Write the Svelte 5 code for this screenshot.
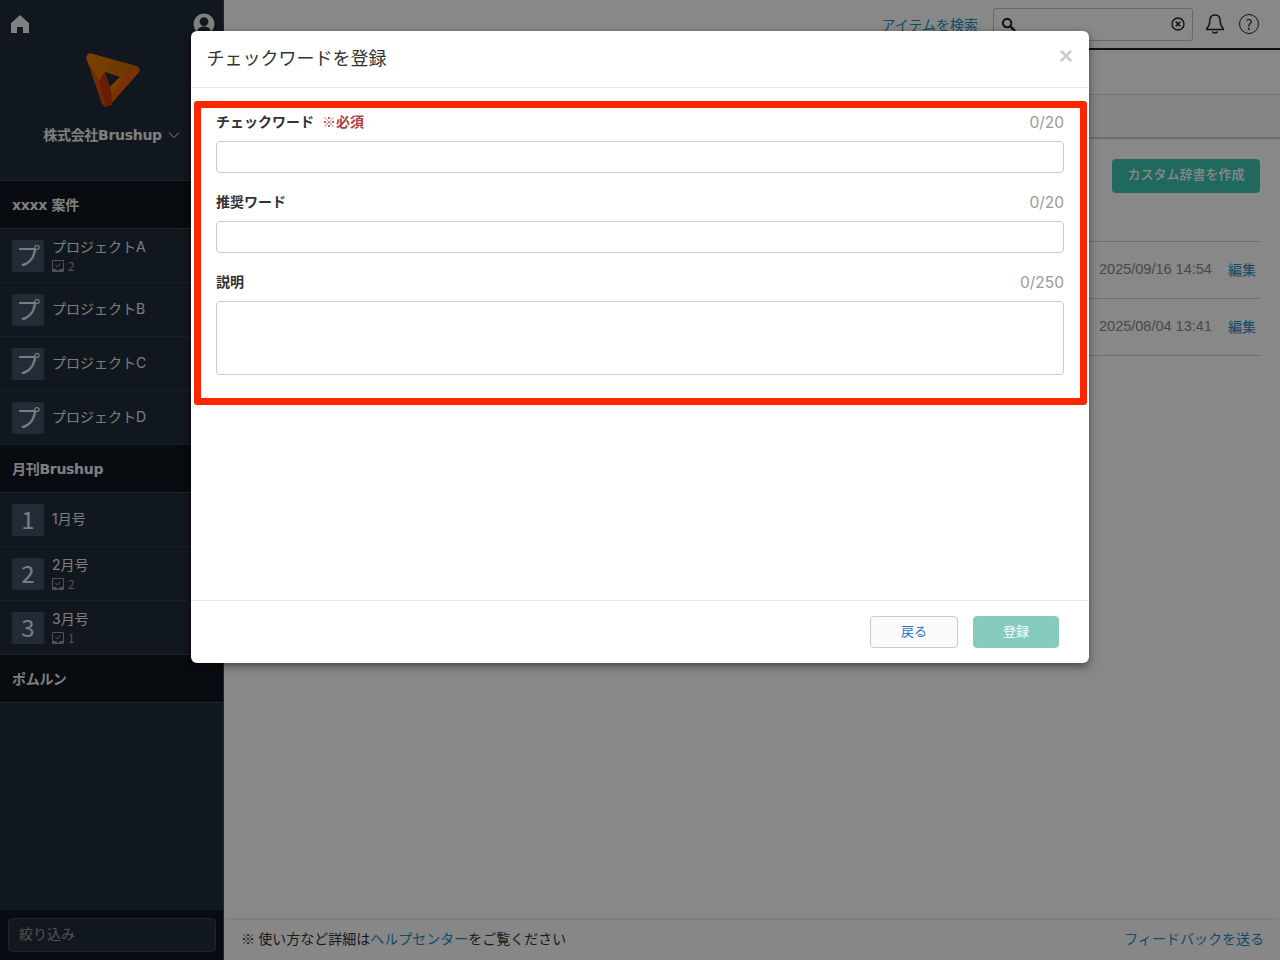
<script>
	const groups = [
		{
			title: 'xxxx 案件',
			items: [
				{ tile: 'プ', name: 'プロジェクトA', count: 2 },
				{ tile: 'プ', name: 'プロジェクトB' },
				{ tile: 'プ', name: 'プロジェクトC' },
				{ tile: 'プ', name: 'プロジェクトD' }
			]
		},
		{
			title: '月刊Brushup',
			items: [
				{ tile: '1', name: '1月号' },
				{ tile: '2', name: '2月号', count: 2 },
				{ tile: '3', name: '3月号', count: 1 }
			]
		},
		{ title: 'ポムルン', items: [] }
	];

	const rows = ['2025/09/16 14:54', '2025/08/04 13:41'];

	const fields = [
		{ label: 'チェックワード', required: true, counter: '0/20' },
		{ label: '推奨ワード', counter: '0/20' },
		{ label: '説明', counter: '0/250', multiline: true }
	];
</script>

<div class="app">
	<aside class="side">
		<div class="side-top">
			<svg class="home" viewBox="0 0 20 20" width="20" height="20"><path d="M10 1 1 9.200V19h6v-6h6v6h6V9.200z" fill="currentColor" /></svg>
			<svg class="user" viewBox="0 0 22 22" width="22" height="22">
				<circle cx="11" cy="11" r="10.500" fill="currentColor" />
				<circle cx="11" cy="8.600" r="4.400" fill="#212c3a" />
				<path d="M3.800 19c1-4 3.800-5.600 7.200-5.600s6.200 1.600 7.200 5.600z" fill="#212c3a" />
			</svg>
		</div>
		<svg class="logo" viewBox="0 0 56 56" width="56" height="56">
			<defs>
				<linearGradient id="band" x1="0" y1="0" x2="1" y2="0">
					<stop offset="0" stop-color="#e87a00" />
					<stop offset="1" stop-color="#c96400" />
				</linearGradient>
			</defs>
			<path d="M6 .5 51 13q5 2 3 6L25 52q-5 4-8-1L1.500 6Q1 0 6 .5z" fill="#d84c0c" />
			<path d="M6 .5 51 13q3 1 3.500 3L35 24 20 19 14 28 1.500 6Q1 0 6 .5z" fill="url(#band)" />
			<path d="M35 24 54.500 16q.5 1.500-.5 3L25 52q-2 2-4 1.500L26 34z" fill="#ee5810" />
			<path d="M20 19 26 34 27 52 21 53.500 14 28z" fill="#bf3a08" />
			<path d="M20 19 35 24 25 34z" fill="#212c3a" />
			<path d="M35 24 25 34 27 40 38 26z" fill="#e87a00" />
		</svg>
		<div class="company">株式会社Brushup
			<svg viewBox="0 0 12 8" width="12" height="8"><path d="M1 1.500 6 6.500l5-5" fill="none" stroke="currentColor" stroke-width="1" /></svg>
		</div>

		<nav class="nav">
			{#each groups as group}
				<div class="group-title">{group.title}</div>
				{#each group.items as item}
					<div class="item">
						<span class="tile">{item.tile}</span>
						<div class="item-text">
							<span class="item-name">{item.name}</span>
							{#if item.count}
								<span class="item-count">
									<svg viewBox="0 0 12 12" width="12" height="12">
										<path d="M.5.500h11v11H.5z" fill="none" stroke="currentColor" />
										<path d="M3.500 5 5.500 7 8.500 3.500" fill="none" stroke="currentColor" />
										<path d="M1 9h3l1 1.500h2L8 9h3v2.500H1z" fill="currentColor" />
									</svg>
									{item.count}
								</span>
							{/if}
						</div>
					</div>
				{/each}
			{/each}
		</nav>

		<div class="filter"><div class="filter-box">絞り込み</div></div>
	</aside>

	<main class="main">
		<header class="top">
			<a class="link search-link" href="#search">アイテムを検索</a>
			<div class="search">
				<svg viewBox="0 0 16 16" width="15" height="15"><circle cx="6.500" cy="6.500" r="4.500" fill="none" stroke="currentColor" stroke-width="2.200" /><path d="m10 10 5 5" stroke="currentColor" stroke-width="2.500" /></svg>
				<svg viewBox="0 0 14 14" width="14" height="14"><circle cx="7" cy="7" r="6" fill="none" stroke="currentColor" stroke-width="1.400" /><path d="m4.800 4.800 4.400 4.400m0-4.400-4.400 4.400" stroke="currentColor" stroke-width="1.600" /></svg>
			</div>
			<svg class="top-icon" viewBox="0 0 20 22" width="20" height="22"><path d="M10 2c-3.500 0-5.200 2.600-5.200 6 0 4-1 5.500-3 7.500v1h16.400v-1c-2-2-3-3.500-3-7.500 0-3.400-1.700-6-5.200-6z" fill="none" stroke="currentColor" stroke-width="1.500" /><path d="M7.500 18.500c.5 2 4.500 2 5 0" fill="none" stroke="currentColor" stroke-width="1.500" /></svg>
			<span class="help">?</span>
		</header>
		<div class="tabs"></div>
		<div class="subtabs"></div>
		<section class="content">
			<div class="actions"><span class="primary">カスタム辞書を作成</span></div>
			<div class="table">
				{#each rows as date}
					<div class="row">
						<span class="date">{date}</span>
						<a class="link edit" href="#edit">編集</a>
					</div>
				{/each}
			</div>
		</section>
		<footer class="foot">
			<span>※ 使い方など詳細は<a class="link" href="#help">ヘルプセンター</a>をご覧ください</span>
			<a class="link" href="#feedback">フィードバックを送る</a>
		</footer>
	</main>

	<div class="overlay">
		<div class="modal">
			<div class="modal-head">
				<h2>チェックワードを登録</h2>
				<span class="close">×</span>
			</div>
			<div class="modal-body">
				<div class="marked">
					{#each fields as field}
						<div class="field">
							<div class="field-head">
								<span class="field-label">{field.label}{#if field.required}<em>※必須</em>{/if}</span>
								<span class="counter">{field.counter}</span>
							</div>
							{#if field.multiline}
								<textarea class="control area"></textarea>
							{:else}
								<input class="control" type="text" />
							{/if}
						</div>
					{/each}
				</div>
			</div>
			<div class="modal-foot">
				<button class="back">戻る</button>
				<button class="submit">登録</button>
			</div>
		</div>
	</div>
</div>

<style>
	:global(body) {
		margin: 0;
	}
	.app {
		position: relative;
		display: flex;
		width: 1280px;
		height: 960px;
		overflow: hidden;
		background: #fff;
		font-family: "Noto Sans CJK JP", sans-serif;
		color: #333;
	}

	.side {
		flex: 0 0 223px;
		display: flex;
		flex-direction: column;
		background: #212c3a;
		color: #fff;
		border-right: 1px solid #3a4656;
	}
	.side-top {
		display: flex;
		justify-content: space-between;
		align-items: center;
		padding: 14px 8px 0 10px;
		height: 20px;
		color: #f0f0f0;
	}
	.logo {
		display: block;
		margin: 19px 0 0 85px;
	}
	.company {
		display: flex;
		align-items: center;
		justify-content: center;
		gap: 6px;
		margin-top: 14px;
		height: 24px;
		font-family: "DejaVu Sans", "Noto Sans CJK JP", sans-serif;
		font-size: 14px;
		font-weight: 700;
		letter-spacing: -0.3px;
		line-height: 24px;
		color: #eee;
	}
	.nav {
		flex: 1;
		margin-top: 33px;
		border-top: 1px solid #3a4656;
	}
	.group-title {
		height: 47px;
		padding-left: 12px;
		line-height: 48px;
		font-family: "DejaVu Sans", "Noto Sans CJK JP", sans-serif;
		font-size: 14px;
		font-weight: 700;
		letter-spacing: -0.3px;
		color: #eee;
		background: #0f151d;
		border-bottom: 1px solid #3a4656;
	}
	.item {
		display: flex;
		align-items: center;
		gap: 8px;
		height: 53px;
		padding-left: 12px;
		border-bottom: 1px solid #2f3c4d;
	}
	.tile {
		flex: 0 0 32px;
		height: 32px;
		border-radius: 3px;
		background: #46586a;
		color: #fff;
		font-size: 24px;
		line-height: 29px;
		text-align: center;
		opacity: 0.9;
	}
	.item-text {
		display: flex;
		flex-direction: column;
		gap: 2px;
		padding-bottom: 2px;
	}
	.item-name {
		font-family: "Inter", "Noto Sans CJK JP", sans-serif;
		font-size: 14px;
		line-height: 20px;
		color: #e8e8e8;
	}
	.item-count {
		display: flex;
		align-items: center;
		gap: 4px;
		font-size: 12px;
		line-height: 13px;
		color: #999;
	}
	.filter {
		height: 50px;
		padding: 8px 7px 8px 8px;
		box-sizing: border-box;
		background: #0f151d;
	}
	.filter-box {
		height: 34px;
		box-sizing: border-box;
		padding-left: 10px;
		line-height: 28px;
		font-size: 14px;
		color: #999;
		background: #212c3a;
		border: 1px solid #3a4656;
		border-radius: 4px;
	}

	.main {
		flex: 1;
		display: flex;
		flex-direction: column;
		min-width: 0;
	}
	.link {
		color: #1c8fc7;
		text-decoration: none;
	}
	.top {
		display: flex;
		align-items: center;
		justify-content: flex-end;
		height: 48px;
		padding-right: 21px;
		border-bottom: 2px solid #222;
		font-size: 14px;
	}
	.search-link {
		margin-right: 15px;
	}
	.search {
		display: flex;
		align-items: center;
		justify-content: space-between;
		width: 200px;
		height: 33px;
		box-sizing: border-box;
		padding: 0 7px;
		margin-right: 12px;
		border: 1px solid #c4c4c4;
		border-radius: 3px;
		color: #222;
	}
	.top-icon {
		color: #222;
		margin-right: 14px;
	}
	.help {
		width: 18px;
		height: 18px;
		border: 1.500px solid #222;
		border-radius: 50%;
		text-align: center;
		font-size: 14px;
		line-height: 18px;
		color: #222;
	}
	.tabs {
		height: 44px;
		border-bottom: 1px solid #ddd;
	}
	.subtabs {
		height: 42px;
		background: #fafafa;
		border-bottom: 2px solid #ccc;
	}
	.content {
		flex: 1;
		padding: 20px 20px 0;
	}
	.actions {
		display: flex;
		justify-content: flex-end;
	}
	.primary {
		width: 148px;
		height: 34px;
		border-radius: 4px;
		background: #3cc6b2;
		color: #fff;
		font-size: 13px;
		font-weight: 500;
		line-height: 30px;
		text-align: center;
	}
	.table {
		margin-top: 48px;
		border-top: 1px solid #ccc;
	}
	.row {
		display: flex;
		align-items: center;
		justify-content: flex-end;
		gap: 16px;
		height: 54px;
		padding: 0 4px 2px 0;
		border-bottom: 1px solid #ccc;
		font-size: 13px;
	}
	.date {
		width: 113px;
		font-family: "Liberation Sans", sans-serif;
		color: #888;
		font-size: 14.500px;
		white-space: nowrap;
	}
	.edit {
		font-size: 14px;
	}
	.foot {
		display: flex;
		align-items: center;
		justify-content: space-between;
		height: 40px;
		box-sizing: border-box;
		padding: 0 16px 5px 17px;
		background: #fdfdfd;
		box-shadow: 0 -1px 3px rgba(0, 0, 0, 0.12);
		font-size: 14px;
		color: #333;
	}

	.overlay {
		position: absolute;
		inset: 0;
		display: flex;
		justify-content: center;
		align-items: flex-start;
		padding-top: 31px;
		box-sizing: border-box;
		background: rgba(0, 0, 0, 0.465);
	}
	.modal {
		display: flex;
		flex-direction: column;
		width: 898px;
		height: 632px;
		background: #fff;
		border-radius: 6px;
		box-shadow: 0 3px 9px rgba(0, 0, 0, 0.5);
	}
	.modal-head {
		display: flex;
		align-items: center;
		justify-content: space-between;
		flex: 0 0 57px;
		box-sizing: border-box;
		padding: 0 16px 4px 15.500px;
		border-bottom: 1px solid #e5e5e5;
	}
	h2 {
		margin: 0;
		font-size: 18px;
		font-weight: 400;
		line-height: 50px;
		color: #333;
	}
	.close {
		margin-bottom: 2px;
		font-family: "Liberation Sans", sans-serif;
		font-size: 24px;
		font-weight: 700;
		line-height: 24px;
		color: #ccc;
	}
	.modal-body {
		flex: 1;
		padding: 13px 2px 0 3px;
	}
	.marked {
		height: 304px;
		box-sizing: border-box;
		border: 7px solid #ff2600;
		border-radius: 3px;
		padding: 0 16px 0 15px;
	}
	.field {
		margin-bottom: 15px;
	}
	.field-head {
		display: flex;
		align-items: center;
		justify-content: space-between;
		height: 33px;
		box-sizing: border-box;
		padding-bottom: 8px;
	}
	.field-label {
		font-size: 14px;
		font-weight: 700;
		color: #333;
	}
	.field-label em {
		margin-left: 8px;
		font-style: normal;
		color: #a94442;
	}
	.counter {
		padding-top: 4px;
		font-family: "Inter", sans-serif;
		font-size: 15.500px;
		color: #999;
	}
	.control {
		display: block;
		width: 100%;
		height: 32px;
		box-sizing: border-box;
		margin: 0;
		padding: 6px 12px;
		background: #fff;
		border: 1px solid #ccc;
		border-radius: 4px;
		resize: none;
	}
	.area {
		height: 74px;
	}
	.modal-foot {
		display: flex;
		justify-content: flex-end;
		align-items: center;
		gap: 15px;
		flex: 0 0 62px;
		padding-right: 30px;
		border-top: 1px solid #e5e5e5;
	}
	button {
		height: 32px;
		padding: 0 0 3px;
		border-radius: 4px;
		font-family: inherit;
		font-size: 13px;
		line-height: 26px;
	}
	.back {
		width: 88px;
		background: #fafafa;
		border: 1px solid #ccc;
		color: #2a72c8;
	}
	.submit {
		width: 86px;
		background: #84cabd;
		border: 1px solid #84cabd;
		color: #fff;
	}
</style>
